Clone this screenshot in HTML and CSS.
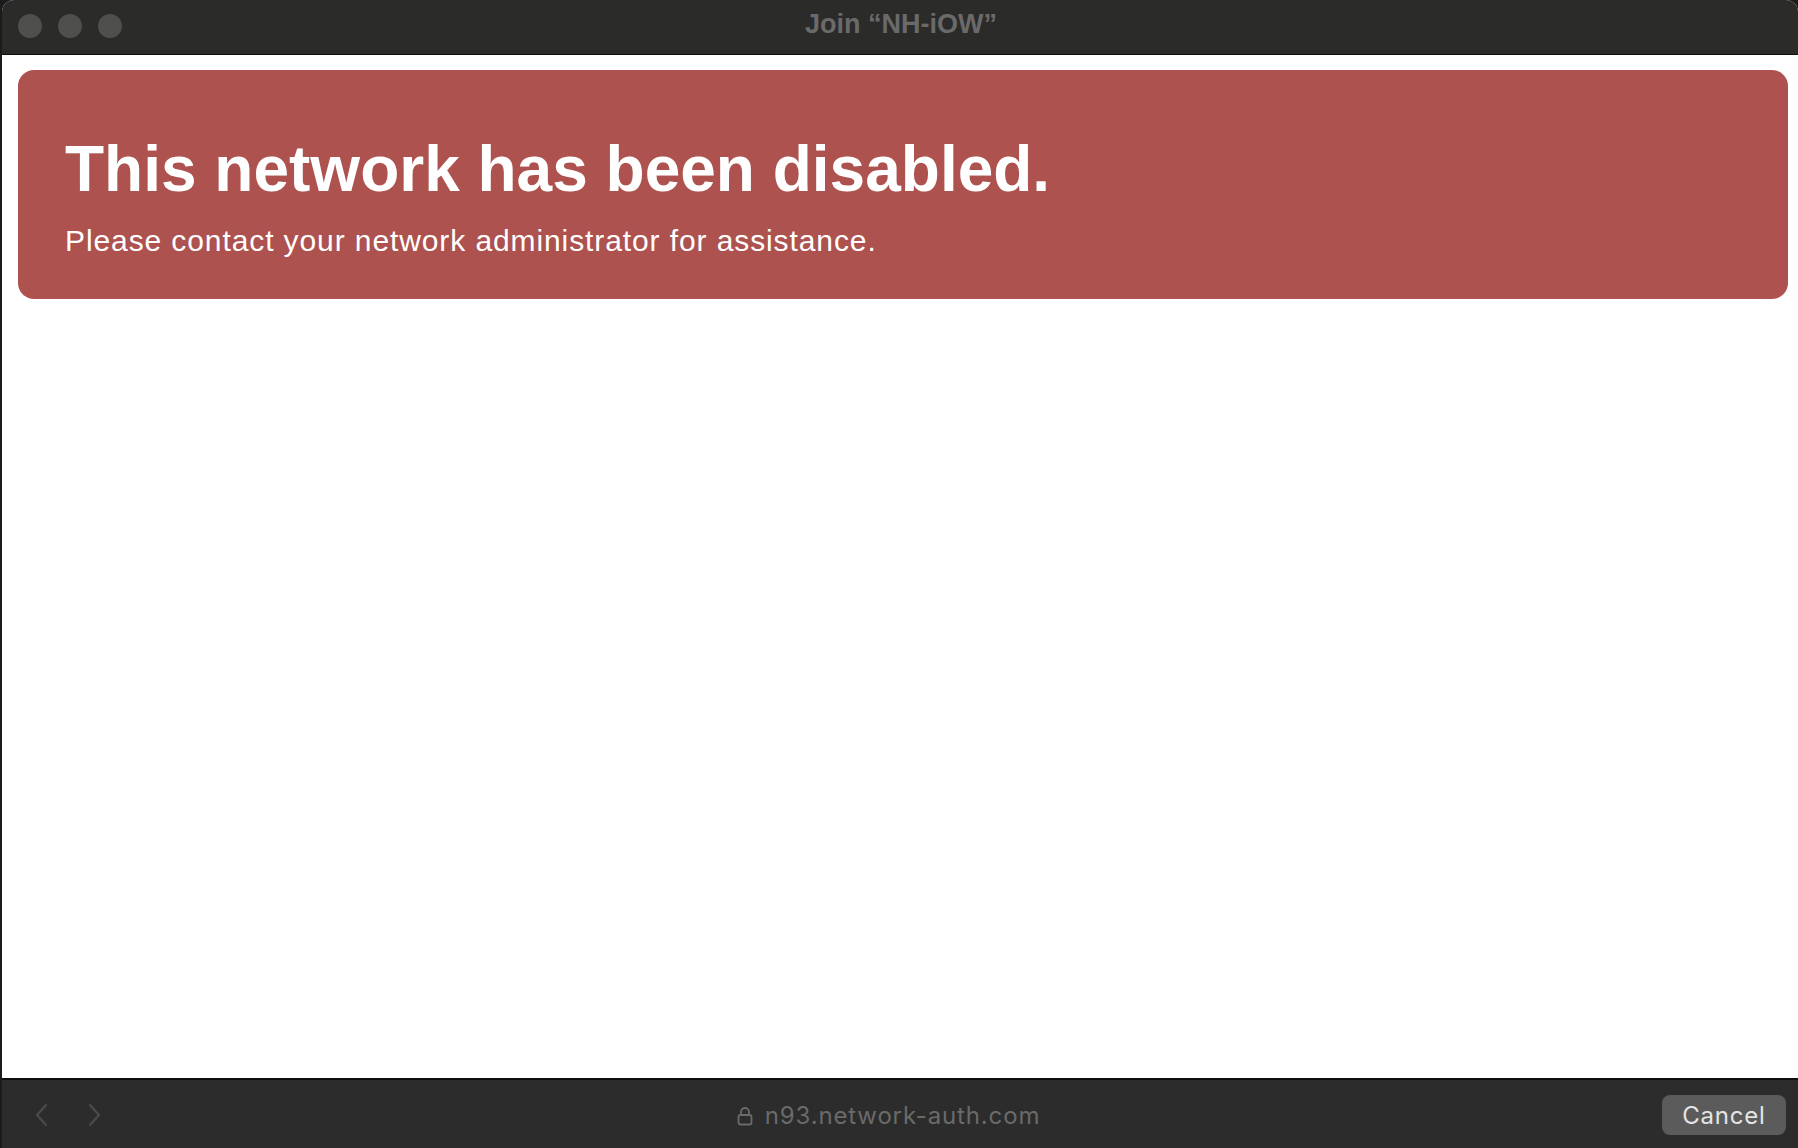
FILE: index.html
```html
<!DOCTYPE html>
<html>
<head>
<meta charset="utf-8">
<title>Join "NH-iOW"</title>
<link rel="stylesheet" href="styles.css">
</head>
<body>
<div class="window">
  <div class="titlebar">
    <div class="lights">
      <span class="light"></span>
      <span class="light"></span>
      <span class="light"></span>
    </div>
    <div class="title">Join “NH-iOW”</div>
  </div>
  <div class="content">
    <div class="banner">
      <h1 class="banner-title">This network has been disabled.</h1>
      <p class="banner-text">Please contact your network administrator for assistance.</p>
    </div>
  </div>
  <div class="bottombar">
    <div class="nav">
      <svg class="chev" width="14" height="24" viewBox="0 0 14 24"><path d="M12 2 L3 12 L12 22" fill="none" stroke="#4b4b4b" stroke-width="2.2" stroke-linecap="round" stroke-linejoin="round"/></svg>
      <svg class="chev" width="14" height="24" viewBox="0 0 14 24"><path d="M2 2 L11 12 L2 22" fill="none" stroke="#4b4b4b" stroke-width="2.2" stroke-linecap="round" stroke-linejoin="round"/></svg>
    </div>
    <div class="url">
      <svg class="lock" width="16" height="20" viewBox="0 0 16 20"><path d="M4 9 V6 a4 4 0 0 1 8 0 V9" fill="none" stroke="#6a6a6a" stroke-width="1.8"/><rect x="1.5" y="9" width="13" height="9.5" rx="2" fill="none" stroke="#6a6a6a" stroke-width="1.8"/></svg>
      <span class="url-text">n93.network-auth.com</span>
    </div>
    <button class="cancel">Cancel</button>
  </div>
</div>
</body>
</html>
```

FILE: styles.css
```css
html, body {
  margin: 0;
  padding: 0;
  background: #1b1b1b;
}
body {
  width: 1798px;
  height: 1148px;
  overflow: hidden;
}
.window {
  width: 1796px;
  height: 1148px;
  margin-left: 2px;
  display: flex;
  flex-direction: column;
  background: #ffffff;
  border-radius: 12px 12px 0 0;
  overflow: hidden;
  font-family: "Liberation Sans", Arial, sans-serif;
}
.titlebar {
  height: 54px;
  flex: none;
  background: #2b2b2a;
  border-bottom: 1px solid #0e0e0e;
  position: relative;
  display: flex;
  align-items: center;
  justify-content: center;
}
.lights {
  position: absolute;
  left: 16px;
  top: 14px;
  display: flex;
  gap: 16px;
}
.light {
  width: 24px;
  height: 24px;
  border-radius: 50%;
  background: #4f4f4e;
}
.title {
  color: #6a6a6a;
  font-weight: bold;
  font-size: 27px;
  line-height: 31px;
  margin-bottom: 5px;
  margin-left: 2px;
}
.content {
  flex: 1;
  background: #ffffff;
  padding: 15px 10px 0 16px;
}
.banner {
  height: 229px;
  box-sizing: border-box;
  background: #ad524e;
  border-radius: 16px;
  padding: 0 0 0 47px;
  color: #ffffff;
  display: flex;
  flex-direction: column;
}
.banner-title {
  margin: 0;
  padding-top: 61px;
  font-size: 64px;
  line-height: 76px;
  font-weight: bold;
}
.banner-text {
  margin: 16px 0 0 0;
  font-size: 30px;
  line-height: 36px;
  letter-spacing: 0.9px;
}
.bottombar {
  height: 68px;
  flex: none;
  background: #2c2c2c;
  border-top: 2px solid #0e0e0e;
  position: relative;
  display: flex;
  align-items: center;
  justify-content: center;
}
.nav {
  position: absolute;
  left: 32px;
  top: 23px;
  display: flex;
  gap: 40px;
}
.url {
  display: flex;
  align-items: center;
  gap: 12px;
  margin-top: 3px;
  margin-right: 23px;
}
.url-text {
  color: #6a6a6a;
  font-family: Inter, "Open Sans", sans-serif;
  font-size: 24px;
  letter-spacing: 0.85px;
}
.cancel {
  position: absolute;
  right: 12px;
  top: 15px;
  width: 124px;
  height: 40px;
  border: none;
  border-radius: 8px;
  background: #5b5b5b;
  color: #e4e4e4;
  font-family: Inter, "Open Sans", sans-serif;
  font-size: 24px;
  letter-spacing: 0.8px;
  padding: 0;
}
```
